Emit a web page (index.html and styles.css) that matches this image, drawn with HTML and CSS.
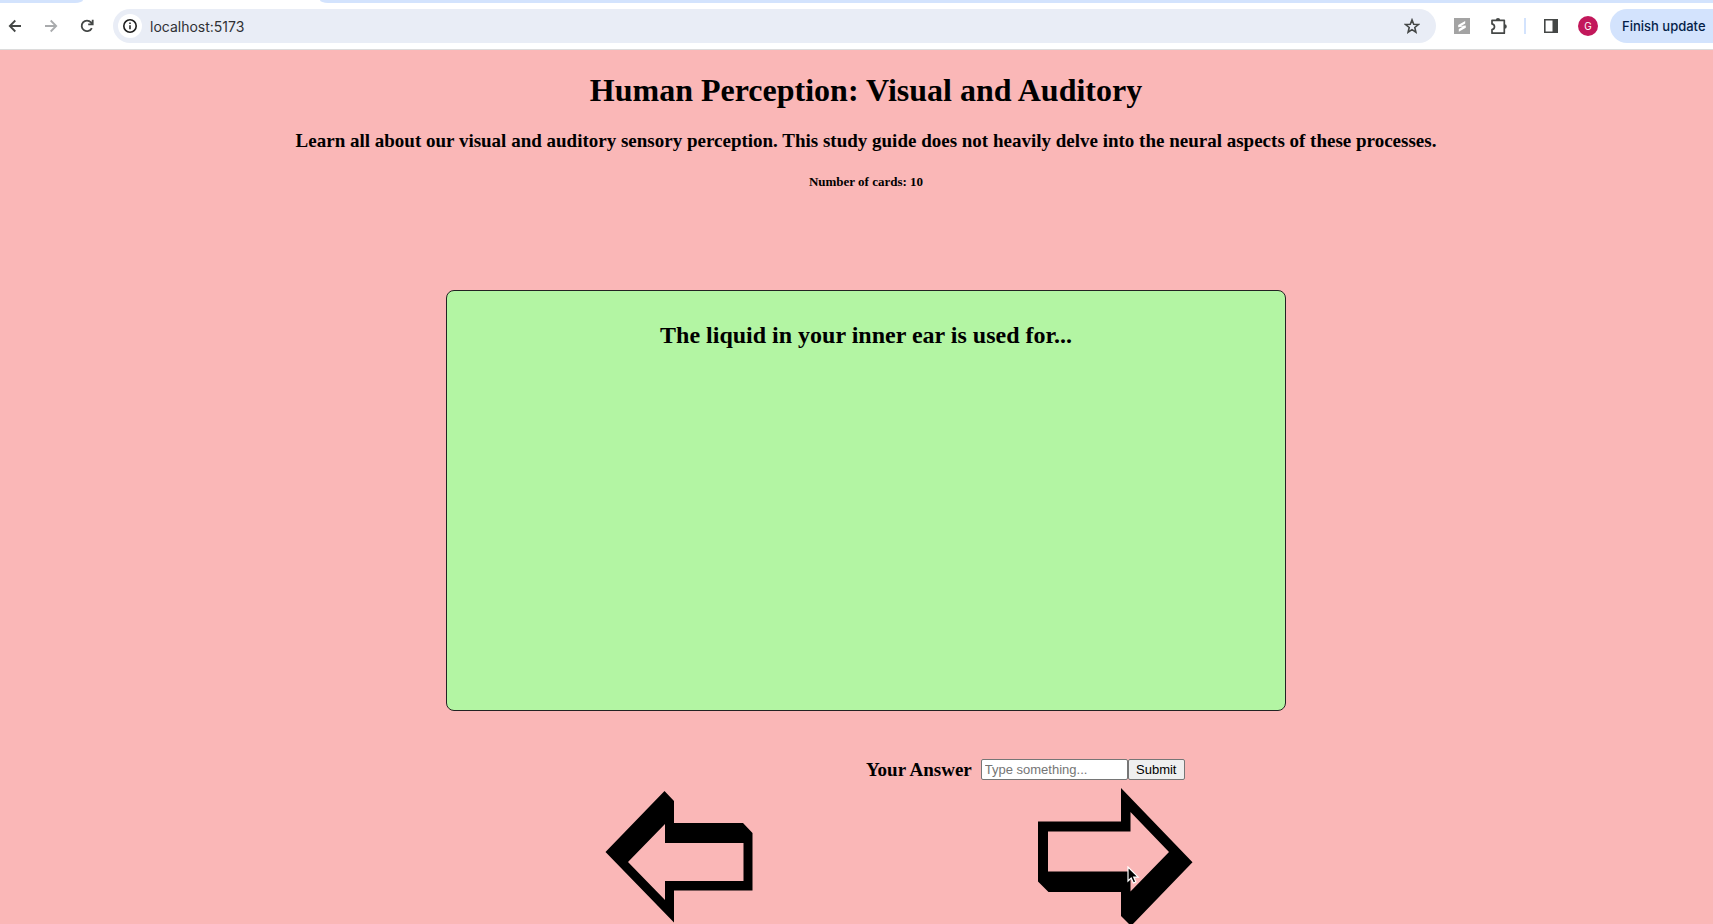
FILE: index.html
```html
<!DOCTYPE html>
<html lang="en">
<head>
<meta charset="utf-8">
<title>Human Perception: Visual and Auditory</title>
<link rel="stylesheet" href="styles.css">
</head>
<body>
<header class="browser">
  <div class="tabs"><span class="tab-before"></span><span class="tab-after"></span></div>
  <div class="toolbar">
    <button class="icon-button" aria-label="Back"><svg width="14" height="14" viewBox="0 0 14 14" fill="none" stroke="#444746" stroke-width="1.8"><path d="M13 7H2M7.3 1.5 1.8 7l5.500 5.500"/></svg></button>
    <button class="icon-button" aria-label="Forward"><svg width="14" height="14" viewBox="0 0 14 14" fill="none" stroke="#a9abad" stroke-width="1.8"><path d="M1 7h11M6.700 1.500 12.200 7l-5.500 5.500"/></svg></button>
    <button class="icon-button" aria-label="Reload"><svg width="14" height="14" viewBox="0 0 14 14" fill="none" stroke="#444746" stroke-width="1.8"><path d="M11.800 9.100A5.300 5.300 0 1 1 11 3.400L12.600 5.200M12.700 .8V5.400H8.200"/></svg></button>
    <div class="address">
      <button class="site-info" aria-label="Site information"><svg width="16" height="16" viewBox="0 0 16 16" fill="none" stroke="#1f1f1f"><circle cx="8" cy="8" r="6.200" stroke-width="1.600"/><path d="M8 7.200v4.100M8 4.500v1.500" stroke-width="1.500"/></svg></button>
      <input class="url" type="text" aria-label="Address" value="localhost:5173">
      <button class="star" aria-label="Bookmark"><svg width="16" height="16" viewBox="0 0 16 16" fill="none" stroke="#444746" stroke-width="1.600"><path d="m8 1.900 1.700 4.300 4.700.3-3.600 3 1.100 4.700L8 11.700l-3.900 2.500 1.100-4.700-3.600-3 4.700-.3z"/></svg></button>
    </div>
    <div class="tools">
      <button class="icon-button" aria-label="Extension"><svg width="16" height="16" viewBox="0 0 16 16"><path fill="#a3a3a3" d="M0 0h16v16H0z"/><path fill="#fff" d="m4.200 7 7-4v2.600L7 8.100l4.800-.6v2.200l-7 4v-2.600L9 8.600l-4.800.6z"/></svg></button>
      <button class="icon-button" aria-label="Extensions"><svg width="18" height="18" viewBox="0 0 18 18"><path fill="none" stroke="#444746" stroke-width="1.700" stroke-linejoin="round" d="M2 3.300h12.300v12.900H2v-3.500q2.500-.6 2.500-2.900T2 6.900z"/><path fill="#444746" d="M5.800 3.200a2.200 2.200 0 0 1 4.400 0zM14.600 7.300a2.200 2.200 0 0 1 0 4.400z"/></svg></button>
      <span class="divider"></span>
      <button class="icon-button" aria-label="Side panel"><svg width="14" height="14" viewBox="0 0 14 14"><path fill="none" stroke="#444746" stroke-width="1.600" d="M.8.8h12.400v12.400H.8z"/><path fill="#444746" d="M8.500 0H14v14H8.500z"/></svg></button>
      <button class="avatar" aria-label="Profile">G</button>
      <button class="update">Finish update</button>
    </div>
  </div>
</header>
<main class="page">
  <h1 class="title">Human Perception: Visual and Auditory</h1>
  <h3 class="description">Learn all about our visual and auditory sensory perception. This study guide does not heavily delve into the neural aspects of these processes.</h3>
  <h5 class="count">Number of cards: 10</h5>
  <section class="card"><h2 class="question">The liquid in your inner ear is used for...</h2></section>
  <form class="answer">
    <label class="answer-label" for="guess">Your Answer</label>
    <input class="guess" id="guess" type="text" placeholder="Type something...">
    <button class="submit" type="button">Submit</button>
  </form>
  <nav class="arrows">
    <button class="arrow" aria-label="Previous card"><svg width="148" height="138" viewBox="605 788 148 138"><path fill-rule="evenodd" d="M664.500 791 674 801V823H743L752.500 833V890.500H674V922.500L605.500 852zM665 824 628 862 665 900V881H743.500V843H665z"/></svg></button>
    <button class="arrow" aria-label="Next card"><svg width="155" height="138" viewBox="1038 788 155 138"><path fill-rule="evenodd" d="M1121 788 1192.500 862.300 1131 926 1121 916V892H1048.500L1038 881.500V821.500H1121zM1130.500 812 1169 852 1130.500 891.500V871.500H1048V831.500H1130.500z"/></svg><svg class="pointer" width="13" height="19" viewBox="0 0 13 19"><path fill="#000" stroke="#fff" stroke-width="1.200" d="M1 1v14l3.200-3 2.200 5 2.500-1.100-2.200-4.800h4.500z"/></svg></button>
  </nav>
</main>
</body>
</html>
```
FILE: styles.css
```css
* { box-sizing: border-box; }
html, body { height: 100%; }
body {
  margin: 0;
  overflow: hidden;
  background: #fab7b7;
  color: #000;
  font-family: "Liberation Serif", "Times New Roman", serif;
}
button { border: 0; padding: 0; background: none; color: inherit; }
svg { display: block; }

.browser {
  background: #fff;
  border-bottom: 1px solid #dcdcdc;
  font-family: Inter, "Liberation Sans", sans-serif;
}
.tabs { display: flex; gap: 237px; height: 3px; }
.tab-before { width: 83px; background: #d3e3fd; border-bottom-right-radius: 8px 3px; }
.tab-after { flex: 1; background: #d3e3fd; border-bottom-left-radius: 8px 3px; }
.toolbar { display: flex; align-items: center; height: 46px; padding-left: 8px; }
.icon-button { display: flex; flex: none; }
.toolbar > .icon-button { margin-right: 22px; }
.address {
  display: flex;
  flex: 1;
  align-items: center;
  height: 34px;
  margin-left: -3px;
  padding: 0 16px 0 5px;
  border-radius: 17px;
  background: #e9edf6;
}
.site-info {
  display: grid;
  place-items: center;
  width: 24px;
  height: 24px;
  border-radius: 50%;
  background: #fff;
}
.url {
  flex: 1;
  margin-left: 8px;
  padding: 0;
  border: 0;
  outline: 0;
  background: transparent;
  color: #303134;
  font: 14px Inter, "Liberation Sans", sans-serif;
}
.tools { display: flex; flex: none; align-items: center; padding-left: 18px; }
.tools > .icon-button { margin-right: 20px; }
.divider { width: 2px; height: 16px; margin-right: 18px; margin-left: -4px; background: #d3e3fd; }
.avatar {
  width: 20px;
  height: 20px;
  margin-right: 12px;
  border-radius: 50%;
  background: #c2185b;
  color: #fff;
  font: 10px Inter, sans-serif;
}
.update {
  width: 103px;
  height: 34px;
  padding-left: 12px;
  border-radius: 17px 0 0 17px;
  background: #d3e3fd;
  color: #041e49;
  font: 500 13px Inter, sans-serif;
  text-align: left;
  white-space: nowrap;
}

.page { padding-left: 19px; }
.title, .description, .count, .question { margin: 0; text-align: center; }
.title { padding-top: 20px; font-size: 32px; line-height: 40px; }
.description { margin-top: 19px; font-size: 19px; line-height: 24px; }
.count { margin-top: 21px; font-size: 13px; line-height: 16px; }
.card {
  max-width: 840px;
  min-height: 421px;
  margin: 100px auto 0;
  padding-top: 28px;
  border: 1px solid #222;
  border-radius: 8px;
  background: #b3f5a3;
}
.question { font-size: 24px; line-height: 32px; }
.answer { display: flex; align-items: center; margin-top: 48px; padding-left: 50%; }
.answer-label { margin-right: 9px; font-size: 19px; font-weight: bold; line-height: 20px; }
.guess, .submit { height: 21px; border: 1px solid #767676; border-radius: 2px; font: 13px "Liberation Sans", Arial, sans-serif; }
.guess { width: 147px; padding: 0 3px; background: #fff; }
.guess::placeholder { color: #757575; }
.submit { width: 57px; background: #efefef; }
.arrows { display: flex; justify-content: center; gap: 285px; margin-top: 8px; padding-left: 66px; }
.arrow { position: relative; }
.pointer { position: absolute; top: 78px; left: 89px; }
```
